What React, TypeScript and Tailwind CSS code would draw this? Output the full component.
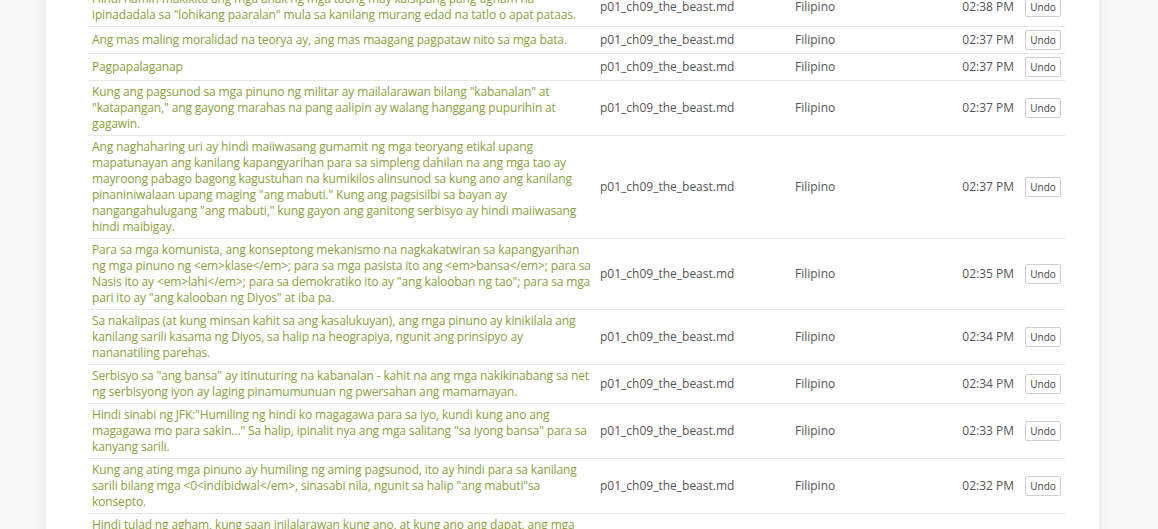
type Entry = { text: string; file: string; lang: string; time: string };

const entries: Entry[] = [
  {
    text: 'Hindi namin makikita ang mga anak ng mga taong may kaisipang pang-agham na ipinadadala sa "lohikang paaralan" mula sa kanilang murang edad na tatlo o apat pataas.',
    file: "p01_ch09_the_beast.md",
    lang: "Filipino",
    time: "02:38 PM",
  },
  {
    text: "Ang mas maling moralidad na teorya ay, ang mas maagang pagpataw nito sa mga bata.",
    file: "p01_ch09_the_beast.md",
    lang: "Filipino",
    time: "02:37 PM",
  },
  {
    text: "Pagpapalaganap",
    file: "p01_ch09_the_beast.md",
    lang: "Filipino",
    time: "02:37 PM",
  },
  {
    text: 'Kung ang pagsunod sa mga pinuno ng militar ay mailalarawan bilang "kabanalan" at "katapangan," ang gayong marahas na pang aalipin ay walang hanggang pupurihin at gagawin.',
    file: "p01_ch09_the_beast.md",
    lang: "Filipino",
    time: "02:37 PM",
  },
  {
    text: 'Ang naghaharing uri ay hindi maiiwasang gumamit ng mga teoryang etikal upang mapatunayan ang kanilang kapangyarihan para sa simpleng dahilan na ang mga tao ay mayroong pabago bagong kagustuhan na kumikilos alinsunod sa kung ano ang kanilang pinaniniwalaan upang maging "ang mabuti." Kung ang pagsisilbi sa bayan ay nangangahulugang "ang mabuti," kung gayon ang ganitong serbisyo ay hindi maiiwasang hindi maibigay.',
    file: "p01_ch09_the_beast.md",
    lang: "Filipino",
    time: "02:37 PM",
  },
  {
    text: 'Para sa mga komunista, ang konseptong mekanismo na nagkakatwiran sa kapangyarihan ng mga pinuno ng <em>klase</em>; para sa mga pasista ito ang <em>bansa</em>; para sa Nasis ito ay <em>lahi</em>; para sa demokratiko ito ay "ang kalooban ng tao"; para sa mga pari ito ay "ang kalooban ng Diyos" at iba pa.',
    file: "p01_ch09_the_beast.md",
    lang: "Filipino",
    time: "02:35 PM",
  },
  {
    text: "Sa nakalipas (at kung minsan kahit sa ang kasalukuyan), ang mga pinuno ay kinikilala ang kanilang sarili kasama ng Diyos, sa halip na heograpiya, ngunit ang prinsipyo ay nananatiling parehas.",
    file: "p01_ch09_the_beast.md",
    lang: "Filipino",
    time: "02:34 PM",
  },
  {
    text: 'Serbisyo sa "ang bansa" ay itinuturing na kabanalan - kahit na ang mga nakikinabang sa net ng serbisyong iyon ay laging pinamumunuan ng pwersahan ang mamamayan.',
    file: "p01_ch09_the_beast.md",
    lang: "Filipino",
    time: "02:34 PM",
  },
  {
    text: 'Hindi sinabi ng JFK:"Humiling ng hindi ko magagawa para sa iyo, kundi kung ano ang magagawa mo para sakin..." Sa halip, ipinalit nya ang mga salitang "sa iyong bansa" para sa kanyang sarili.',
    file: "p01_ch09_the_beast.md",
    lang: "Filipino",
    time: "02:33 PM",
  },
  {
    text: 'Kung ang ating mga pinuno ay humiling ng aming pagsunod, ito ay hindi para sa kanilang sarili bilang mga <0<indibidwal</em>, sinasabi nila, ngunit sa halip "ang mabuti"sa konsepto.',
    file: "p01_ch09_the_beast.md",
    lang: "Filipino",
    time: "02:32 PM",
  },
  {
    text: "Hindi tulad ng agham, kung saan inilalarawan kung ano, at kung ano ang dapat, ang mga teoryang etikal ay naglalarawan kung ano ang dapat gawin ng mga tao at kung paano sila dapat mamuhay.",
    file: "p01_ch09_the_beast.md",
    lang: "Filipino",
    time: "02:31 PM",
  },
];

export default function App() {
  return (
    <div
      className="min-h-screen bg-[#f7f7f7] overflow-hidden"
      style={{ fontFamily: '"Open Sans", "Liberation Sans", sans-serif' }}>
      <div className="ml-[46px] w-[1053px] bg-white shadow-[0_0_14px_rgba(0,0,0,0.07)] pl-[42px] pr-[34px] -mt-[12px] pb-10">
        {/* Historique des traductions */}
        <table className="w-[977px] table-fixed border-collapse text-[12px] leading-[16px]">
          <colgroup>
            <col className="w-[508px]" />
            <col className="w-[195px]" />
            <col />
            <col className="w-[100px]" />
            <col className="w-[47px]" />
          </colgroup>
          <tbody>
            {entries.map((e, i) => (
              <tr key={i} className="border-b border-[#e8e8e3]">
                <td className="align-middle py-[3px] px-1 tracking-[-0.14px] text-[#8a9f3e]">
                  {e.text}
                </td>
                <td className="align-middle py-[3px] px-1 text-[#555]">
                  {e.file}
                </td>
                <td className="align-middle py-[3px] px-1 text-[#555]">
                  {e.lang}
                </td>
                <td className="align-middle py-[3px] px-1 text-right text-[#555]">
                  {e.time}
                </td>
                <td className="align-middle py-[3px] pl-[7px] pr-[5px]">
                  <button className="flex items-center justify-center w-[36px] h-[20px] rounded-[2px] border border-[#cfcfcf] bg-white text-[10px] leading-none text-[#444]">
                    Undo
                  </button>
                </td>
              </tr>
            ))}
          </tbody>
        </table>
      </div>
    </div>
  );
}
